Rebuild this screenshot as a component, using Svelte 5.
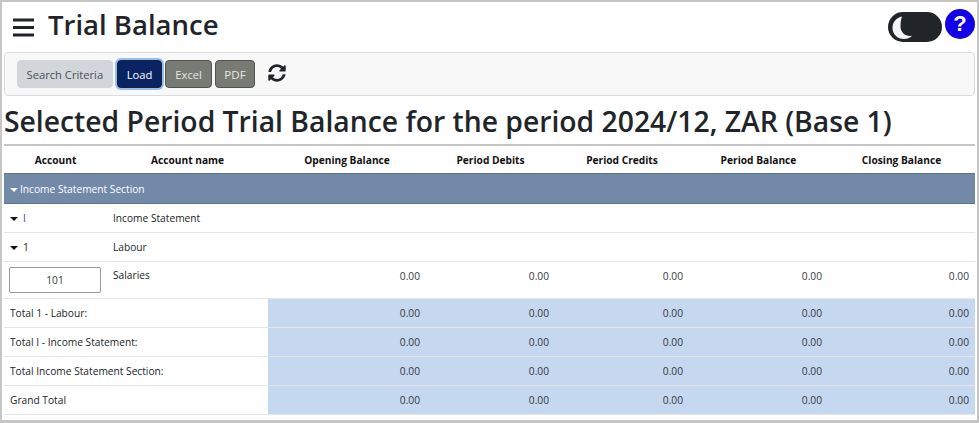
<script lang="ts">
  const zero = Array(5).fill('0.00');
  const headers = ['Opening Balance', 'Period Debits', 'Period Credits', 'Period Balance', 'Closing Balance'];
  const totals = ['Total 1 - Labour:', 'Total I - Income Statement:', 'Total Income Statement Section:', 'Grand Total'];
</script>

<div class="page">
  <header class="top">
    <button class="burger" type="button" aria-label="Menu">
      <svg width="22" height="19" viewBox="0 0 22 19"><path d="M0 2h21M0 9.500h21M0 17h21" stroke="#212529" stroke-width="3" fill="none"/></svg>
    </button>
    <h1>Trial Balance</h1>
    <div class="spacer"></div>
    <div class="toggle">
      <svg width="22" height="26" viewBox="0 0 22 26"><path d="M11 2.500C5.500 3.500 1.500 8 1.500 14c0 6.200 5 11 11.500 11 3 0 6-1 8-3.200-6.500 1-11.500-3.300-11.500-9.300C9.500 8.500 10 5 11 2.500z" fill="#f4f4f4"/></svg>
    </div>
    <div class="help">?</div>
  </header>

  <div class="toolbar">
    <button class="btn criteria" type="button">Search Criteria</button>
    <button class="btn load" type="button">Load</button>
    <button class="btn grey" type="button">Excel</button>
    <button class="btn grey pdf" type="button">PDF</button>
    <svg class="refresh" width="18" height="18" viewBox="0 0 512 512"><path fill="#212529" d="M370.720 133.280C339.458 104.008 298.888 87.962 255.848 88c-77.458.068-144.328 53.178-162.791 126.850-1.344 5.363-6.122 9.150-11.651 9.150H24.103c-7.498 0-13.194-6.807-11.807-14.176C33.933 94.924 134.813 8 256 8c66.448 0 126.791 26.136 171.315 68.685L463.030 40.970C478.149 25.851 504 36.559 504 57.941V192c0 13.255-10.745 24-24 24H345.941c-21.382 0-32.090-25.851-16.971-40.971l41.750-41.749zM32 296h134.059c21.382 0 32.090 25.851 16.971 40.971l-41.750 41.750c31.262 29.273 71.835 45.319 114.876 45.280 77.418-.070 144.315-53.144 162.787-126.849 1.344-5.363 6.122-9.150 11.651-9.150h57.304c7.498 0 13.194 6.807 11.807 14.176C478.067 417.076 377.187 504 256 504c-66.448 0-126.791-26.136-171.315-68.685L48.970 471.030C33.851 486.149 8 475.441 8 454.059V320c0-13.255 10.745-24 24-24z"/></svg>
  </div>

  <h2>Selected Period Trial Balance for the period 2024/12, ZAR (Base 1)</h2>

  <table>
    <colgroup>
      <col style="width:103px" /><col style="width:161px" /><col style="width:158px" /><col style="width:129px" /><col style="width:134px" /><col style="width:139px" /><col />
    </colgroup>
    <thead>
      <tr>
        <th>Account</th>
        <th>Account name</th>
        {#each headers as h}<th>{h}</th>{/each}
      </tr>
    </thead>
    <tbody>
      <tr class="section"><td colspan="7"><span class="caret white"></span>Income Statement Section</td></tr>
      <tr class="row">
        <td><span class="caret"></span><span class="acc purple">I</span></td>
        <td>Income Statement</td>
        <td colspan="5"></td>
      </tr>
      <tr class="row">
        <td><span class="caret"></span><span class="acc">1</span></td>
        <td>Labour</td>
        <td colspan="5"></td>
      </tr>
      <tr class="entry">
        <td><input value="101" aria-label="Account" /></td>
        <td>Salaries</td>
        {#each zero as z}<td class="num">{z}</td>{/each}
      </tr>
      {#each totals as t}
        <tr class="row total">
          <td colspan="2">{t}</td>
          {#each zero as z}<td class="num">{z}</td>{/each}
        </tr>
      {/each}
    </tbody>
  </table>
</div>

<style>
  :global(body) {
    margin: 0;
    background: #fff;
  }

  .page {
    box-sizing: border-box;
    width: 979px;
    height: 423px;
    padding: 0 2px 0 2px;
    border: 2px solid #c6c6c6;
    border-bottom-width: 3px;
    font-family: 'Open Sans', 'Noto Sans', sans-serif;
    color: #212529;
    overflow: hidden;
  }

  .top {
    display: flex;
    align-items: center;
    height: 48px;
    padding-left: 9px;
  }

  .burger {
    display: flex;
    padding: 0;
    border: none;
    background: none;
    margin-top: 2px;
  }

  h1 {
    margin: 0 0 3px 13px;
    font-size: 27.500px;
    font-weight: 600;
    line-height: 1;
  }

  .spacer {
    flex: 1;
  }

  .toggle {
    box-sizing: border-box;
    display: flex;
    align-items: center;
    width: 54px;
    height: 30px;
    margin-top: 2px;
    padding-left: 3px;
    border-radius: 15px;
    background: #212529;
  }

  .help {
    width: 30px;
    height: 30px;
    margin: 0 0 4px 3px;
    border-radius: 50%;
    background: #1400e6;
    color: #fff;
    font-family: 'Liberation Sans', sans-serif;
    font-size: 22px;
    font-weight: 700;
    line-height: 29px;
    text-align: center;
  }

  .toolbar {
    box-sizing: border-box;
    display: flex;
    align-items: center;
    gap: 3px;
    height: 44px;
    margin-top: 2px;
    padding: 0 12px;
    background: #f8f8f8;
    border: 1px solid #dcdcdc;
    border-radius: 4px;
  }

  .btn {
    height: 28px;
    padding: 0 9px;
    border: 1px solid transparent;
    border-radius: 4px;
    font-family: inherit;
    font-size: 11.200px;
    white-space: nowrap;
  }

  .criteria {
    padding: 0 8.500px;
    background: #d2d6db;
    color: #495057;
    border-color: #d2d6db;
  }

  .load {
    margin-left: 1px;
    background: #0a2463;
    color: #fff;
    border-color: #15233f;
    box-shadow: 0 0 0 2px #98bfe9;
  }

  .grey {
    background: #777b73;
    color: #e6e6e6;
    border-color: #50534e;
  }

  .pdf {
    padding: 0 8.500px;
    font-size: 11.600px;
  }

  .refresh {
    margin-left: 10px;
    margin-top: -2px;
  }

  h2 {
    margin: 6px 0 0 0;
    font-size: 28.300px;
    font-weight: 600;
    line-height: 38px;
    white-space: nowrap;
    height: 42px;
  }

  table {
    width: 100%;
    table-layout: fixed;
    border-collapse: collapse;
    font-size: 10.200px;
  }

  th {
    height: 27px;
    padding: 0;
    border-top: 2px solid #c4c4c4;
    font-weight: 700;
    color: #111;
    text-align: center;
  }

  .section td {
    box-sizing: border-box;
    height: 30px;
    padding: 0 0 0 6px;
    background: #7389a8;
    border-top: 1px solid #5f7391;
    border-bottom: 1px solid #5f7391;
    color: #fff;
  }

  .caret {
    display: inline-block;
    width: 0;
    height: 0;
    margin-right: 2px;
    vertical-align: 1px;
    border-style: solid;
    border-width: 4px 4px 0 4px;
    border-color: #111 transparent transparent transparent;
  }

  .caret.white {
    border-top-color: #fff;
  }

  .row td,
  .entry td {
    box-sizing: border-box;
    padding: 0 6px;
    border-bottom: 1px solid #e6e6e6;
    color: #212529;
  }

  .row td {
    height: 29px;
  }

  .entry td {
    height: 37px;
    vertical-align: top;
    padding-top: 6px;
  }

  .acc {
    margin-left: 3px;
  }

  .purple {
    color: #5b3a9a;
  }

  .entry td:first-child {
    padding: 5px 0 0 5px;
  }

  input {
    box-sizing: border-box;
    width: 92px;
    height: 26px;
    padding: 0;
    border: 1px solid #9a9a9a;
    border-radius: 2px;
    font-family: inherit;
    font-size: 10.200px;
    color: #343a40;
    text-align: center;
  }

  td.num {
    text-align: right;
    color: #33383d;
  }

  .entry td.num {
    padding-top: 7px;
  }

  .total td.num {
    background: #c6d7f0;
  }
</style>
